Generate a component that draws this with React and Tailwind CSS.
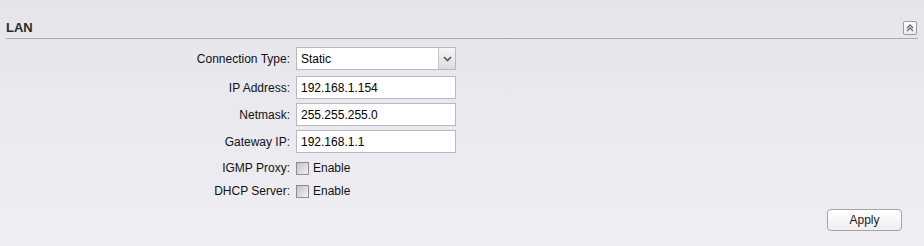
import React from "react";

function Label({ children }) {
  return (
    <div className="text-right text-[12px] leading-[14px] text-[#111]">{children}</div>
  );
}

function TextInput({ value }) {
  return (
    <div className="w-[160px] h-[23px] border border-[#b8b8c2] bg-white flex items-center pl-[4px] text-[12px] text-black">
      {value}
    </div>
  );
}

function Check() {
  return (
    <div className="flex items-center gap-[4px]">
      <div className="w-[13px] h-[13px] border border-[#8e8e8e] bg-gradient-to-br from-[#c4c4c4] to-[#f2f2f2]" />
      <span className="text-[12px] leading-[14px] text-[#111]">Enable</span>
    </div>
  );
}

export default function App() {
  return (
    <div className="w-[924px] h-[246px] bg-gradient-to-b from-[#e5e5ea] to-[#efeff3] font-['Liberation_Sans',Arial,sans-serif] overflow-hidden">
      <div className="mx-[6px] pt-[20px] pb-[3px] border-b border-[#a9a9ad] flex justify-between items-center">
        <div className="text-[13px] leading-[15px] font-bold text-[#2a2a2a]">LAN</div>
        <div className="w-[14px] h-[14px] mr-[1px] rounded-[2px] border border-[#9a9a9a] bg-gradient-to-b from-white to-[#ececec] flex items-center justify-center">
          <svg width="8" height="8" viewBox="0 0 8 8">
            <path d="M1 4 L4 1 L7 4" fill="none" stroke="#6a6a6a" strokeWidth="1.3" />
            <path d="M1 7 L4 4 L7 7" fill="none" stroke="#6a6a6a" strokeWidth="1.3" />
          </svg>
        </div>
      </div>

      <div className="grid grid-cols-[290px_auto] gap-x-[6px] items-center mt-[8px] justify-start">
        <Label>Connection Type:</Label>
        <div className="w-[160px] h-[23px] border border-[#b8b8c2] bg-white flex">
          <div className="flex-1 flex items-center pl-[4px] text-[12px] text-black">Static</div>
          <div className="w-[17px] h-full border-l border-[#c4c4cc] bg-gradient-to-b from-[#f6f6f6] to-[#dcdcdc] flex items-center justify-center">
            <svg width="9" height="6" viewBox="0 0 9 6">
              <path d="M1 1 L4.5 4.5 L8 1" fill="none" stroke="#555" strokeWidth="1.6" />
            </svg>
          </div>
        </div>

        <div className="col-span-2 h-[6px]" />
        <Label>IP Address:</Label>
        <TextInput value="192.168.1.154" />

        <div className="col-span-2 h-[4px]" />
        <Label>Netmask:</Label>
        <TextInput value="255.255.255.0" />

        <div className="col-span-2 h-[4px]" />
        <Label>Gateway IP:</Label>
        <TextInput value="192.168.1.1" />

        <div className="col-span-2 h-[8px]" />
        <Label>IGMP Proxy:</Label>
        <Check />

        <div className="col-span-2 h-[9px]" />
        <Label>DHCP Server:</Label>
        <Check />
      </div>

      <div className="flex justify-end pr-[22px] mt-[11px]">
        <div className="w-[75px] h-[22px] rounded-[4px] border border-[#a4a4a4] bg-gradient-to-b from-white to-[#efefef] flex items-center justify-center text-[12px] text-[#1a1a1a]">
          Apply
        </div>
      </div>
    </div>
  );
}
